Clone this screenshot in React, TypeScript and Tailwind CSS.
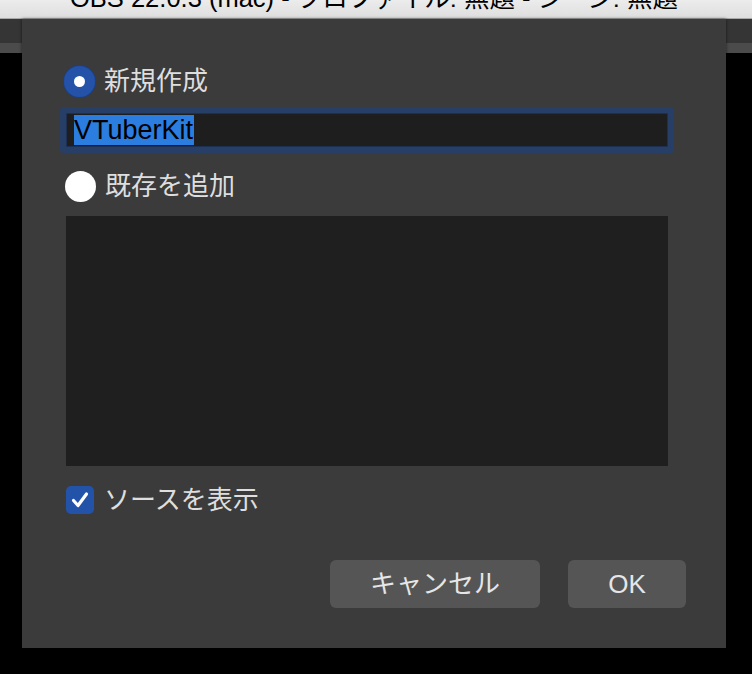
import React, { useState } from 'react';

const font = { fontFamily: '"Liberation Sans", "Noto Sans CJK JP", sans-serif' };

const Radio = ({ checked, onClick }: { checked: boolean; onClick: () => void }) => (
  <button
    onClick={onClick}
    className={`w-[31px] h-[31px] rounded-full flex items-center justify-center shrink-0 ${
      checked ? 'bg-[#2452a8] shadow-[0_0_0_1px_#1d3f80]' : 'bg-white'
    }`}
  >
    {checked && <span className="w-[11px] h-[11px] rounded-full bg-white" />}
  </button>
);

export default function App() {
  const [mode, setMode] = useState<'new' | 'existing'>('new');
  const [showSource, setShowSource] = useState(true);

  return (
    <div className="relative w-[752px] h-[674px] bg-black overflow-hidden" style={font}>
      {/* window title bar */}
      <div className="h-[19px] bg-gradient-to-b from-[#ececec] to-[#dedede] border-b border-[#a9a9a9] overflow-hidden">
        <div className="pl-[70px] -mt-[14px] text-[25.5px] leading-[25px] text-black whitespace-nowrap">
          OBS 22.0.3 (mac) - プロファイル: 無題 - シーン: 無題
        </div>
      </div>
      <div className="h-[24px] bg-[#353535]" />
      <div className="h-[10px] bg-[#4b4b4b]" />

      {/* dialog */}
      <div className="absolute left-[22px] top-[19px] w-[704px] h-[629px] bg-[#3b3b3b] shadow-[0_0_3px_rgba(0,0,0,0.6)] pl-[44px] pr-[58px] pt-[46px] flex flex-col text-[#dedede]">
        <div className="flex items-center h-[32px] -ml-[2px]">
          <Radio checked={mode === 'new'} onClick={() => setMode('new')} />
          <span className="ml-[9px] text-[26px] leading-none">新規作成</span>
        </div>

        <div className="mt-[16px] h-[34px] border border-[#1d3052] bg-[#1e1e1e] rounded-[1px] shadow-[0_0_0_6px_#273f66] flex items-center pl-[7px]">
          <span className="bg-[#2b7ddf] text-black text-[27px] leading-[30px] h-[30px] pr-[1px]">VTuberKit</span>
        </div>

        <div className="mt-[24px] flex items-center h-[30px] -ml-[1px]">
          <Radio checked={mode === 'existing'} onClick={() => setMode('existing')} />
          <span className="ml-[9px] text-[26px] leading-none">既存を追加</span>
        </div>

        <div className="mt-[15px] h-[250px] bg-[#1f1f1f]" />

        <div className="mt-[20px] flex items-center h-[28px]">
          <button
            onClick={() => setShowSource(!showSource)}
            className="w-[28px] h-[28px] rounded-[5px] bg-[#2353a8] flex items-center justify-center"
          >
            {showSource && (
              <svg width="20" height="20" viewBox="0 0 20 20">
                <path d="M3.5 10.5 L8 15.5 L16.5 4" fill="none" stroke="white" strokeWidth="3.2" strokeLinecap="round" strokeLinejoin="round" />
              </svg>
            )}
          </button>
          <span className="ml-[10px] text-[26px] leading-none">ソースを表示</span>
        </div>

        <div className="mt-[46px] flex justify-end gap-[28px] -mr-[18px]">
          <button className="w-[210px] h-[48px] rounded-[6px] bg-[#555555] text-[#e6e6e6] text-[26px]">キャンセル</button>
          <button className="w-[118px] h-[48px] rounded-[6px] bg-[#555555] text-[#e6e6e6] text-[26px]">OK</button>
        </div>
      </div>
    </div>
  );
}
